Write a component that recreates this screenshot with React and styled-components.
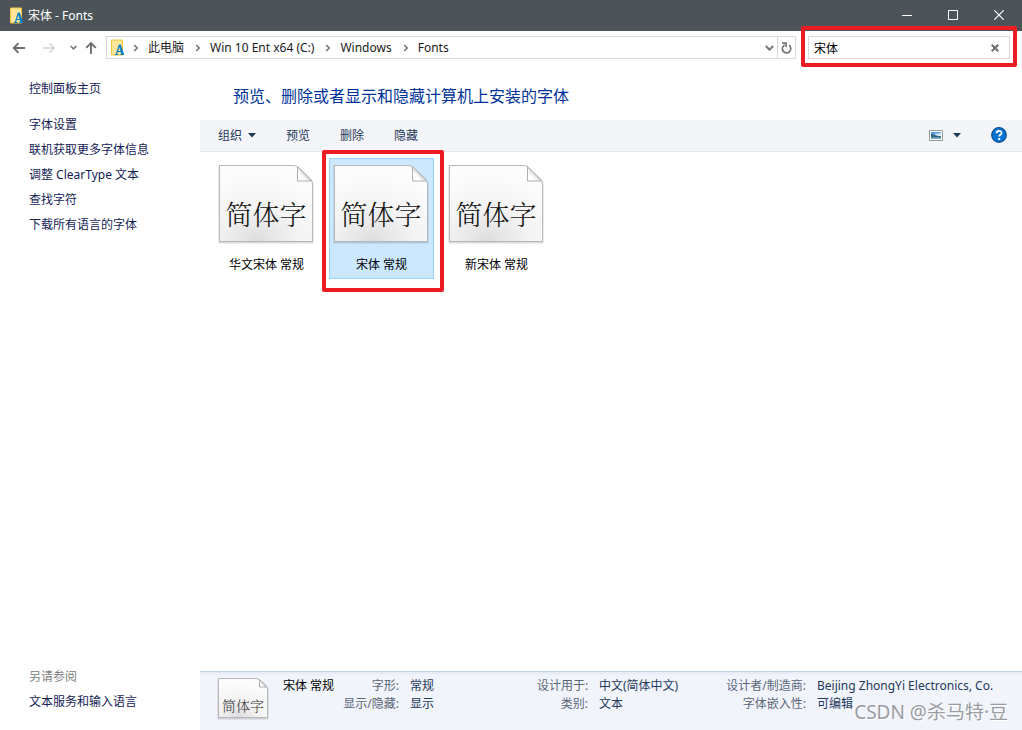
import React, { useState } from "react";
import styled, { createGlobalStyle } from "styled-components";

const GlobalStyle = createGlobalStyle`
  *, *::before, *::after { box-sizing: border-box; }
  body {
    margin: 0;
    background: #fff;
    color: #000;
    font: 12px/18px "Noto Sans", "Noto Sans CJK SC", sans-serif;
  }
  button, input { font: inherit; color: inherit; }
  svg { display: block; flex: none; }
`;

const Window = styled.div`
  display: flex;
  flex-direction: column;
  min-height: 100vh;
  overflow: hidden;
`;

const TitleBar = styled.header`
  display: flex;
  align-items: center;
  height: 31px;
  padding-left: 9px;
  background: #4c545a;
  color: #fff;
`;

const Title = styled.h1`
  flex: 1;
  margin: 0 0 0 5px;
  font-size: 12px;
  font-weight: 400;
`;

const WindowButton = styled.button`
  display: grid;
  place-items: center;
  width: 46px;
  height: 31px;
  padding: 0 0 2px;
  border: 0;
  background: none;
`;

const NavBar = styled.nav`
  display: flex;
  align-items: center;
  height: 33px;
  padding: 0 12px 0 10px;
`;

const NavButton = styled.button`
  display: grid;
  place-items: center;
  width: ${(p) => p.$width}px;
  height: 23px;
  padding: 0;
  border: 0;
  background: none;
  color: ${(p) => (p.$faint ? "#d4d4d4" : "#6e6e6e")};
`;

const AddressBar = styled.div`
  display: flex;
  flex: 1;
  align-items: center;
  height: 23px;
  padding-left: 3px;
  border: 1px solid #d9d9d9;
`;

const Crumbs = styled.ol`
  display: flex;
  flex: 1;
  gap: 2px;
  margin: 0;
  padding: 0;
  list-style: none;
`;

const Crumb = styled.li`
  display: flex;
  align-items: center;
  white-space: nowrap;
  svg { margin: 0 9px; }
`;

const CrumbLink = styled.a`
  color: #1b1b1b;
  text-decoration: none;
`;

const RefreshButton = styled(NavButton)`
  height: 21px;
  border-left: 1px solid #d9d9d9;
`;

const SearchBox = styled.div`
  position: relative;
  display: flex;
  align-items: center;
  width: 202px;
  height: 23px;
  margin-left: 12px;
  border: 1px solid #d9d9d9;
`;

const SearchInput = styled.input`
  flex: 1;
  min-width: 0;
  height: 21px;
  padding: 0 5px;
  border: 0;
  outline: 0;
  background: none;
`;

const Highlight = styled.span`
  position: absolute;
  z-index: 2;
  inset: ${(p) => p.$inset};
  border: 4px solid #ed1c24;
  border-radius: 2px;
  pointer-events: none;
`;

const Body = styled.div`
  display: flex;
  flex: 1;
`;

const Sidebar = styled.aside`
  display: flex;
  flex-direction: column;
  width: 200px;
  padding: 12px 0 16px 29px;
`;

const SideLink = styled.a`
  display: block;
  line-height: 25px;
  color: #151c55;
  text-decoration: none;
`;

const HomeLink = styled(SideLink)`
  margin-bottom: 11px;
`;

const SeeAlso = styled.div`
  margin-top: auto;
`;

const SeeAlsoTitle = styled.div`
  line-height: 25px;
  color: #808080;
`;

const Main = styled.main`
  display: flex;
  flex: 1;
  flex-direction: column;
  min-width: 0;
`;

const Heading = styled.h2`
  margin: 0;
  padding: 20px 0 12px 33px;
  font-size: 16px;
  font-weight: 400;
  line-height: 24px;
  color: #003399;
`;

const Toolbar = styled.div`
  display: flex;
  align-items: center;
  height: 32px;
  padding: 0 15px 0 18px;
  border-bottom: 1px solid #e6e7e9;
  background: #f4f5f8;
  color: #1e395b;
`;

const ToolButton = styled.button`
  display: flex;
  align-items: center;
  gap: ${(p) => p.$gap || 6}px;
  margin-right: 30px;
  padding: 0;
  border: 0;
  background: none;
`;

const ToolSpacer = styled.div`
  flex: 1;
`;

const HelpButton = styled(ToolButton)`
  margin-right: 0;
  padding-bottom: 1px;
`;

const FontGrid = styled.ul`
  display: flex;
  flex-wrap: wrap;
  flex: 1;
  align-content: flex-start;
  gap: 10px;
  margin: 0;
  padding: 6px 14px;
  list-style: none;
`;

const FontTile = styled.li`
  position: relative;
  display: flex;
  flex-direction: column;
  gap: 12px;
  width: 105px;
  height: 121px;
  padding: 5px 3px 0;
  border: 1px solid ${(p) => (p.$selected ? "#99d1ff" : "transparent")};
  background: ${(p) => (p.$selected ? "#cce8ff" : "transparent")};
`;

const FontName = styled.span`
  text-align: center;
`;

const SheetFrame = styled.div`
  display: grid;
  flex: none;
  align-self: flex-start;
  > * { grid-area: 1 / 1; }
`;

const Sample = styled.span`
  align-self: end;
  justify-self: center;
  padding-bottom: ${(p) => (p.$small ? 5 : 10)}px;
  font-family: "Noto Serif CJK SC", "Noto Sans CJK SC", sans-serif;
  font-size: ${(p) => (p.$small ? 14 : 27)}px;
  font-weight: 300;
  line-height: ${(p) => (p.$small ? 20 : 40)}px;
  color: ${(p) => (p.$small ? "#333" : "#111")};
`;

const Details = styled.footer`
  position: relative;
  display: flex;
  height: 59px;
  padding: 5px 0 0 17px;
  border-top: 1px solid #c3d3e6;
  background: linear-gradient(#e4ebf6, #f1f4fb 4px);
`;

const DetailName = styled.div`
  width: 60px;
  margin-left: 14px;
  line-height: 18px;
`;

const DetailList = styled.dl`
  display: grid;
  grid-template-columns: ${(p) => p.$label}px ${(p) => p.$value};
  grid-auto-rows: 18px;
  column-gap: 11px;
  margin: 0;
  white-space: nowrap;
`;

const Term = styled.dt`
  text-align: right;
  color: #5a6779;
`;

const Value = styled.dd`
  margin: 0;
  color: #1e395b;
`;

const Watermark = styled.div`
  position: absolute;
  right: 14px;
  bottom: 5px;
  font-size: 19px;
  line-height: 26px;
  color: #999ca2;
  text-shadow: 1px 1px 0 #fff;
  white-space: nowrap;
`;

function FontFolder() {
  return (
    <svg width="14" height="17" viewBox="0 0 14 17" aria-hidden="true">
      <path d="M1.5 1h11v15h-11z" fill="#ffe69b" stroke="#f5c63c" />
      <path d="M8.8 5.5h2L14 15v1h-3.8v-1h1l-.6-2H7.8l-.6 2h1v1H5v-1h.8zM9.3 8l-1.1 4h2.2z" fill="#0d7fc4" />
    </svg>
  );
}

function Chevron() {
  return (
    <svg width="6" height="8" viewBox="0 0 6 8" fill="none" stroke="#777" strokeWidth="1.6" aria-hidden="true">
      <path d="M1.2 1l3 3-3 3" />
    </svg>
  );
}

function DownChevron({ small }) {
  return (
    <svg width={small ? 7 : 9} height={small ? 5 : 6} viewBox="0 0 9 6" fill="none" stroke="#777" strokeWidth="2" aria-hidden="true">
      <path d="M.8 1l3.7 3.7L8.2 1" />
    </svg>
  );
}

function Arrow({ kind }) {
  const paths = {
    back: "M13 7H2M6.5 2.2L1.8 7l4.7 4.8",
    forward: "M1 7h11M7.5 2.2L12.2 7l-4.7 4.8",
    up: "M7 13V2M2.2 6.8L7 2l4.8 4.8",
  };
  return (
    <svg width="14" height="14" viewBox="0 0 14 14" fill="none" stroke="currentColor" strokeWidth={kind === "forward" ? 1.4 : 1.9} aria-hidden="true">
      <path d={paths[kind]} />
    </svg>
  );
}

function Triangle() {
  return (
    <svg width="8" height="5" viewBox="0 0 8 5" aria-hidden="true">
      <path d="M0 0h8L4 4.5z" fill="#1e395b" />
    </svg>
  );
}

function Sheet({ small }) {
  const id = small ? "sheet-small" : "sheet-large";
  const w = small ? 52 : 96;
  const h = small ? 43 : 80;
  const f = small ? 8 : 15;
  const r = w - 1.5;
  const outline = `M1.5 1.5H${r - f - 4}Q${r - f - 1} 1.5 ${r - f + 1} 3.5L${r - 2} ${f}Q${r} ${f + 2} ${r} ${f + 5}V${h - 2.5}H1.5z`;
  return (
    <SheetFrame>
      <svg width={w} height={h} viewBox={`0 0 ${w} ${h}`} aria-hidden="true">
        <defs>
          <radialGradient id={id} cx=".4" cy="1" r=".9">
            <stop offset="0" stopColor="#dedede" />
            <stop offset=".5" stopColor="#f3f3f3" />
            <stop offset="1" stopColor="#fcfcfc" />
          </radialGradient>
          <linearGradient id={`${id}-fold`} x1="1" y1="0" x2="0" y2="1">
            <stop offset=".45" stopColor="#d6d6d6" />
            <stop offset=".7" stopColor="#fff" />
          </linearGradient>
        </defs>
        <path d={outline} transform="translate(0 1)" fill="none" stroke="#000" strokeOpacity=".14" strokeWidth="2" />
        <path d={outline} fill={`url(#${id})`} stroke="#b5b7b9" />
        <path d={`M${r - f} 2.5V${f + 2}H${r - 1}z`} fill={`url(#${id}-fold)`} stroke="#adafb1" strokeLinejoin="round" />
      </svg>
      <Sample $small={small}>简体字</Sample>
    </SheetFrame>
  );
}

function ViewIcon() {
  return (
    <svg width="14" height="11" viewBox="0 0 14 11" aria-hidden="true">
      <path d="M.5.5h13v10H.5z" fill="#fff" stroke="#96999d" />
      <path d="M2 2h10v3H2z" fill="#5b9fe0" />
      <path d="M6 4l6-1v3H6z" fill="#d5ebf8" />
      <path d="M2 4c3 0 4 2 10 2v3H2z" fill="#356a83" />
      <path d="M2 7.5h10V9H2z" fill="#7cb0cf" />
    </svg>
  );
}

function HelpIcon() {
  return (
    <svg width="16" height="16" viewBox="0 0 16 16" aria-hidden="true">
      <circle cx="8" cy="8" r="7.3" fill="#0873d1" stroke="#064f96" strokeWidth="1.2" />
      <path d="M5.6 6.2c0-3.2 5-3.1 5-.2 0 1.8-2.4 1.7-2.4 3.6" fill="none" stroke="#fff" strokeWidth="1.8" />
      <path d="M7.2 11h2v2h-2z" fill="#fff" />
    </svg>
  );
}

const crumbs = ["此电脑", "Win 10 Ent x64 (C:)", "Windows", "Fonts"];
const sideLinks = ["字体设置", "联机获取更多字体信息", "调整 ClearType 文本", "查找字符", "下载所有语言的字体"];
const fonts = ["华文宋体 常规", "宋体 常规", "新宋体 常规"];
const details = [
  { label: 56, value: "127px", rows: [["字形:", "常规"], ["显示/隐藏:", "显示"]] },
  { label: 51, value: "127px", rows: [["设计用于:", "中文(简体中文)"], ["类别:", "文本"]] },
  { label: 80, value: "auto", rows: [["设计者/制造商:", "Beijing ZhongYi Electronics, Co."], ["字体嵌入性:", "可编辑"]] },
];

export default function App() {
  const [query, setQuery] = useState("宋体");
  return (
    <Window>
      <GlobalStyle />
      <TitleBar>
        <FontFolder />
        <Title>宋体 - Fonts</Title>
        <WindowButton aria-label="最小化">
          <svg width="10" height="10" viewBox="0 0 10 10"><path d="M0 5.5h10" stroke="#fff" /></svg>
        </WindowButton>
        <WindowButton aria-label="最大化">
          <svg width="10" height="10" viewBox="0 0 10 10"><path d="M.5.5h9v9h-9z" fill="none" stroke="#fff" /></svg>
        </WindowButton>
        <WindowButton aria-label="关闭">
          <svg width="10" height="10" viewBox="0 0 10 10"><path d="M.3.3l9.4 9.4M9.7.3L.3 9.7" stroke="#fff" strokeWidth="1.2" /></svg>
        </WindowButton>
      </TitleBar>

      <NavBar>
        <NavButton $width={18} aria-label="后退"><Arrow kind="back" /></NavButton>
        <NavButton $width={42} $faint aria-label="前进"><Arrow kind="forward" /></NavButton>
        <NavButton $width={6} aria-label="最近的位置"><DownChevron small /></NavButton>
        <NavButton $width={30} aria-label="向上"><Arrow kind="up" /></NavButton>
        <AddressBar>
          <FontFolder />
          <Crumbs>
            {crumbs.map((name) => (
              <Crumb key={name}>
                <Chevron />
                <CrumbLink href="#">{name}</CrumbLink>
              </Crumb>
            ))}
          </Crumbs>
          <NavButton $width={15} aria-label="以前的位置"><DownChevron /></NavButton>
          <RefreshButton $width={18} aria-label="刷新">
            <svg width="11" height="12" viewBox="0 0 11 12" fill="none" stroke="#777" strokeWidth="1.7">
              <path d="M8 3.2A4.2 4.2 0 1 1 3.6 2.9M1 1.2h4.1v4" />
            </svg>
          </RefreshButton>
        </AddressBar>
        <SearchBox>
          <SearchInput aria-label="搜索 Fonts" value={query} onChange={(e) => setQuery(e.target.value)} />
          <NavButton $width={28} aria-label="清除" onClick={() => setQuery("")}>
            <svg width="8" height="8" viewBox="0 0 8 8"><path d="M.7.7l6.6 6.6M7.3.7L.7 7.3" stroke="#6e6e6e" strokeWidth="2" /></svg>
          </NavButton>
          <Highlight $inset="-11px -8px -9px -8px" />
        </SearchBox>
      </NavBar>

      <Body>
        <Sidebar>
          <HomeLink href="#">控制面板主页</HomeLink>
          {sideLinks.map((t) => <SideLink href="#" key={t}>{t}</SideLink>)}
          <SeeAlso>
            <SeeAlsoTitle>另请参阅</SeeAlsoTitle>
            <SideLink href="#">文本服务和输入语言</SideLink>
          </SeeAlso>
        </Sidebar>

        <Main>
          <Heading>预览、删除或者显示和隐藏计算机上安装的字体</Heading>
          <Toolbar>
            <ToolButton>组织<Triangle /></ToolButton>
            <ToolButton>预览</ToolButton>
            <ToolButton>删除</ToolButton>
            <ToolButton>隐藏</ToolButton>
            <ToolSpacer />
            <ToolButton $gap={10} aria-label="更改视图"><ViewIcon /><Triangle /></ToolButton>
            <HelpButton aria-label="帮助"><HelpIcon /></HelpButton>
          </Toolbar>

          <FontGrid>
            {fonts.map((name, i) => (
              <FontTile key={name} $selected={i === 1}>
                <Sheet />
                <FontName>{name}</FontName>
                {i === 1 && <Highlight $inset="-9px -11px -14px -8px" />}
              </FontTile>
            ))}
          </FontGrid>

          <Details>
            <Sheet small />
            <DetailName>宋体 常规</DetailName>
            {details.map((group) => (
              <DetailList key={group.label} $label={group.label} $value={group.value}>
                {group.rows.map(([term, value]) => (
                  <React.Fragment key={term}>
                    <Term>{term}</Term>
                    <Value>{value}</Value>
                  </React.Fragment>
                ))}
              </DetailList>
            ))}
            <Watermark>CSDN @杀马特·豆</Watermark>
          </Details>
        </Main>
      </Body>
    </Window>
  );
}
